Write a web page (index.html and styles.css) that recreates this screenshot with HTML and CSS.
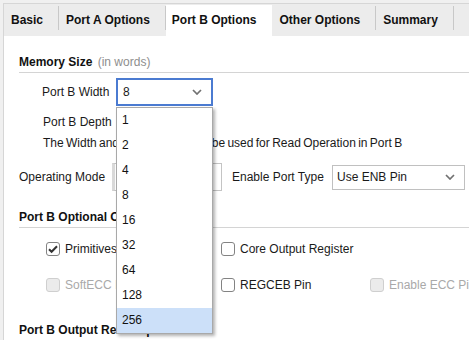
FILE: index.html
```html
<!DOCTYPE html>
<html lang="en">
<head>
    <meta charset="UTF-8">
    <meta name="viewport" content="width=device-width, initial-scale=1.0">
    <title>Port B Options</title>
    <link rel="stylesheet" href="styles.css">
</head>
<body>
    <div class="frame">
        <div class="tabs">
            <div class="tab">Basic</div>
            <div class="tab">Port A Options</div>
            <div class="tab active">Port B Options</div>
            <div class="tab">Other Options</div>
            <div class="tab">Summary</div>
        </div>

        <div class="panel">
            <section class="group">
                <h2 class="group-title">Memory Size <span class="hint">(in words)</span></h2>

                <div class="field field-width">
                    <label class="field-label label-width">Port B Width</label>
                    <div class="combo combo-focus">
                        <span>8</span>
                        <svg class="chevron" width="10" height="6" viewBox="0 0 10 6"><path d="M1 1l4 4 4-4" /></svg>
                        <ul class="dropdown">
                            <li>1</li>
                            <li>2</li>
                            <li>4</li>
                            <li>8</li>
                            <li>16</li>
                            <li>32</li>
                            <li>64</li>
                            <li>128</li>
                            <li class="selected">256</li>
                        </ul>
                    </div>
                </div>

                <div class="line line-depth">Port B Depth</div>
                <div class="line line-note">The Width and Depth values will be used for Read Operation in Port B</div>

                <div class="field field-mode">
                    <label class="field-label label-mode">Operating Mode</label>
                    <div class="combo combo-mode"></div>
                    <label class="field-label label-enable">Enable Port Type</label>
                    <div class="combo combo-enable">
                        <span>Use ENB Pin</span>
                        <svg class="chevron" width="10" height="6" viewBox="0 0 10 6"><path d="M1 1l4 4 4-4" /></svg>
                    </div>
                </div>
            </section>

            <section class="group">
                <h2 class="group-title">Port B Optional Output Registers</h2>

                <div class="checks">
                    <label class="check">
                        <span class="box checked">
                            <svg width="12" height="12" viewBox="0 0 12 12"><path d="M2 6.2l2.6 2.6L10 3.2" /></svg>
                        </span>
                        Primitives Output Register
                    </label>
                    <label class="check">
                        <span class="box"></span>
                        Core Output Register
                    </label>
                    <span></span>
                    <label class="check disabled">
                        <span class="box"></span>
                        SoftECC Input Register
                    </label>
                    <label class="check">
                        <span class="box"></span>
                        REGCEB Pin
                    </label>
                    <label class="check disabled">
                        <span class="box"></span>
                        Enable ECC Pipeline
                    </label>
                </div>
            </section>

            <section class="group">
                <h2 class="group-title">Port B Output Reset Options</h2>
            </section>
        </div>
    </div>
</body>
</html>
```

FILE: styles.css
```css
body {
    margin: 0;
    height: 340px;
    overflow: hidden;
    background-color: #f0f0f0;
    font-family: "Liberation Sans", Arial, sans-serif;
    font-size: 12px;
    color: #1a1a1a;
}

.frame {
    margin: 3px 0 0 3px;
    border-top: 1px solid #d6d6d6;
    border-left: 1px solid #d6d6d6;
    overflow: hidden;
}

/* tab strip */
.tabs {
    display: flex;
    height: 32px;
    background-color: #ececec;
}

.tab {
    position: relative;
    padding: 0 16px 0 7px;
    line-height: 32px;
    font-weight: bold;
    color: #111;
}

.tab::after {
    content: "";
    position: absolute;
    right: 0;
    top: 2px;
    bottom: 6px;
    width: 1px;
    background-color: #c8c8c8;
}

.tab.active {
    margin-top: 1px;
    line-height: 31px;
    padding-left: 6px;
    background-color: #fff;
}

.tab.active::after {
    display: none;
}

/* panel */
.panel {
    background-color: #fff;
    padding-top: 18px;
    height: 286px;
    overflow: hidden;
}

.group {
    padding-left: 15px;
}

.group + .group {
    margin-top: 18px;
}

.group-title {
    margin: 0;
    font-size: 12px;
    line-height: 16px;
    padding-bottom: 2px;
    border-bottom: 1px solid #d4d4d4;
    color: #111;
}

.hint {
    font-weight: normal;
    color: #8e8e8e;
    margin-left: 2px;
}

.field {
    display: flex;
    align-items: center;
    height: 28px;
}

.field-width {
    margin-top: 5px;
    padding-left: 23px;
}

.field-mode {
    margin-top: 12px;
}

.field-label {
    flex-shrink: 0;
}

.label-width {
    width: 74px;
}

.label-mode {
    width: 93px;
}

.label-enable {
    margin-left: 10px;
    width: 100px;
}

.line {
    padding-left: 24px;
    line-height: 16px;
}

.line-depth {
    margin-top: 8px;
}

.line-note {
    margin-top: 5px;
    word-spacing: -1px;
}

/* combo boxes */
.combo {
    position: relative;
    box-sizing: border-box;
    display: flex;
    align-items: center;
    justify-content: space-between;
    background-color: #fff;
}

.combo-focus {
    width: 97px;
    height: 28px;
    padding: 0 9px 0 5px;
    border: 2px solid #4b7bd1;
}

.combo-mode {
    width: 110px;
    height: 28px;
    border: 1px solid #c4c4c4;
    border-left: 3px solid #d9d9d9;
}

.combo-enable {
    width: 133px;
    height: 25px;
    padding: 0 9px 0 4px;
    border: 1px solid #c0c0c0;
}

.chevron path {
    fill: none;
    stroke: #717171;
    stroke-width: 1.7;
}

.dropdown {
    position: absolute;
    z-index: 5;
    left: -2px;
    top: calc(100% + 3px);
    width: 97px;
    box-sizing: border-box;
    margin: 0;
    padding: 0;
    list-style: none;
    background-color: #fff;
    border: 1px solid #a9a9a9;
    box-shadow: 2px 2px 3px rgba(0, 0, 0, 0.3);
}

.dropdown li {
    height: 25px;
    line-height: 25px;
    padding-left: 5px;
    color: #111;
}

.dropdown li.selected {
    background-color: #cce0f9;
}

/* checkboxes */
.checks {
    display: grid;
    grid-template-columns: 175px 149px 100px;
    grid-auto-rows: 20px;
    row-gap: 16px;
    margin-top: 11px;
    padding-left: 27px;
    padding-bottom: 9px;
}

.check {
    display: flex;
    align-items: center;
    gap: 5px;
    white-space: nowrap;
}

.box {
    box-sizing: border-box;
    flex-shrink: 0;
    width: 14px;
    height: 14px;
    border: 1px solid #838383;
    border-radius: 3px;
    background-color: #fff;
    display: flex;
    align-items: center;
    justify-content: center;
}

.box svg path {
    fill: none;
    stroke: #333;
    stroke-width: 2;
}

.check.disabled {
    color: #a9a9a9;
}

.check.disabled .box {
    background-color: #ebebeb;
    border-color: #cfcfcf;
}
```
